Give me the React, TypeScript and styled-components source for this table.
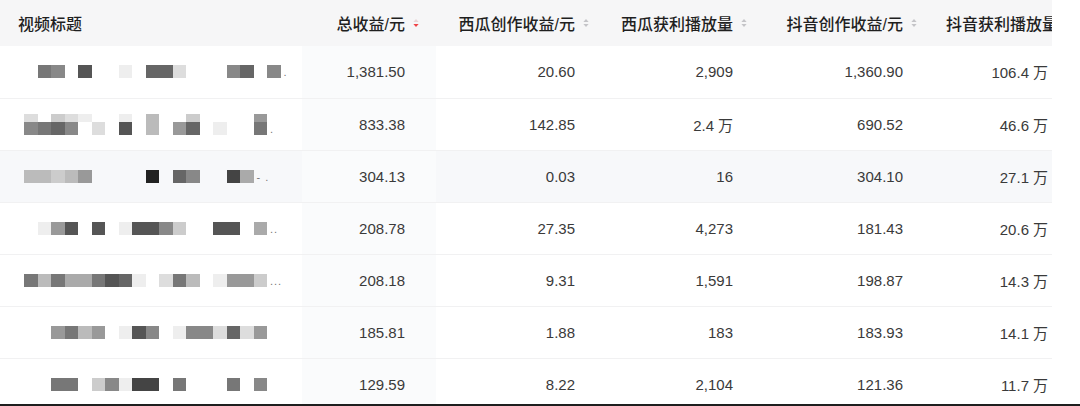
import React from "react";
import styled, { createGlobalStyle } from "styled-components";

const Global = createGlobalStyle`
  html, body { margin: 0; padding: 0; background: #ffffff; }
  body { font-family: "Liberation Sans", "Noto Sans CJK SC", sans-serif; }
`;

const Frame = styled.div`
  width: 1080px;
  height: 406px;
  box-sizing: border-box;
  border-bottom: 2px solid #1e1e1e;
  overflow: hidden;
  background: #ffffff;
`;

const Viewport = styled.div`
  width: 1052px;
  height: 100%;
  overflow: hidden;
`;

const Table = styled.table`
  width: 1079px;
  table-layout: fixed;
  border-collapse: collapse;
  border-spacing: 0;
`;

const HeadCell = styled.th<{ $align?: "left" | "right"; $padRight?: number }>`
  height: 46px;
  padding: 0 ${(p) => (p.$align === "left" ? 0 : p.$padRight ?? 17)}px 0 ${(p) => (p.$align === "left" ? "18px" : "0")};
  background: #f6f6f7;
  text-align: ${(p) => p.$align ?? "right"};
  font-size: 16px;
  font-weight: 500;
  color: #1f1f1f;
  white-space: nowrap;
  overflow: hidden;
  vertical-align: middle;
  box-sizing: border-box;
`;

const HeadInner = styled.span`
  display: inline-flex;
  align-items: center;
  gap: 8px;
`;

const Row = styled.tr<{ $hover?: boolean }>`
  background: ${(p) => (p.$hover ? "#f7f8fa" : "#ffffff")};
`;

const Cell = styled.td<{ $sorted?: boolean }>`
  height: 52px;
  padding: 0 31px 0 0;
  text-align: right;
  font-size: 15px;
  color: #3a3a3a;
  white-space: nowrap;
  border-bottom: 1px solid #f1f1f2;
  background: ${(p) => (p.$sorted ? "#fafbfc" : "transparent")};
  box-sizing: border-box;
  vertical-align: middle;
`;

const TitleCell = styled.td`
  height: 52px;
  padding: 0 0 0 24px;
  border-bottom: 1px solid #f1f1f2;
  box-sizing: border-box;
  vertical-align: middle;
`;

const Mosaic = styled.div`
  display: flex;
  align-items: flex-end;
`;

const MosaicGrid = styled.div`
  display: flex;
  flex-direction: column;
`;

const MosaicLine = styled.div`
  display: flex;
`;

const Block = styled.span<{ $shade: string; $h: number }>`
  display: block;
  width: 13.5px;
  height: ${(p) => p.$h}px;
  background: ${(p) => (p.$shade === "." ? "transparent" : `#${p.$shade}${p.$shade}${p.$shade}`)};
`;

const Trail = styled.span`
  font-size: 11px;
  line-height: 11px;
  color: #777;
  margin-left: 3px;
  letter-spacing: 1px;
`;

const Unit = styled.span`
  margin-left: 4px;
  font-family: "Noto Sans CJK SC", sans-serif;
  font-size: 15px;
`;

const SortIcon = ({ active }: { active?: boolean }) => (
  <svg width="6" height="10" viewBox="0 0 6 10" style={{ display: "block" }}>
    <path d="M3 1 L5.6 4 L0.4 4 Z" fill={active ? "#e8d4d6" : "#c4c4c8"} />
    <path d="M3 9 L5.6 6 L0.4 6 Z" fill={active ? "#f04347" : "#c4c4c8"} />
  </svg>
);

type MosaicRow = { lines: { s: string; h: number }[]; trail: string };

const titles: MosaicRow[] = [
  { lines: [{ s: "f78.5..e.66df..86.8", h: 13 }], trail: "." },
  {
    lines: [
      { s: "d.cde..e.b..c....9", h: 8 },
      { s: "8768.d.5.b.96.e..7", h: 13 },
    ],
    trail: ".",
  },
  { lines: [{ s: "bbcb9....2.68..4a", h: 13 }], trail: "-  ." },
  { lines: [{ s: ".e95.5.e558cf.55.a", h: 13 }], trail: ".." },
  { lines: [{ s: "7b7aa756e.d7b.e99c", h: 13 }], trail: "..." },
  { lines: [{ s: "..97b9.e58.e88d6d9", h: 13 }], trail: "" },
  { lines: [{ s: "ff77.c8e44.7...7.8", h: 13 }], trail: "" },
];

type Value = { n: string; u?: string };
const data: Value[][] = [
  [{ n: "1,381.50" }, { n: "20.60" }, { n: "2,909" }, { n: "1,360.90" }, { n: "106.4", u: "万" }],
  [{ n: "833.38" }, { n: "142.85" }, { n: "2.4", u: "万" }, { n: "690.52" }, { n: "46.6", u: "万" }],
  [{ n: "304.13" }, { n: "0.03" }, { n: "16" }, { n: "304.10" }, { n: "27.1", u: "万" }],
  [{ n: "208.78" }, { n: "27.35" }, { n: "4,273" }, { n: "181.43" }, { n: "20.6", u: "万" }],
  [{ n: "208.18" }, { n: "9.31" }, { n: "1,591" }, { n: "198.87" }, { n: "14.3", u: "万" }],
  [{ n: "185.81" }, { n: "1.88" }, { n: "183" }, { n: "183.93" }, { n: "14.1", u: "万" }],
  [{ n: "129.59" }, { n: "8.22" }, { n: "2,104" }, { n: "121.36" }, { n: "11.7", u: "万" }],
];

const columns = [
  { title: "总收益/元", width: 134, active: true, pad: 17 },
  { title: "西瓜创作收益/元", width: 170, pad: 17 },
  { title: "西瓜获利播放量", width: 158, pad: 17 },
  { title: "抖音创作收益/元", width: 170, pad: 17 },
  { title: "抖音获利播放量", width: 145, pad: 7 },
];

export default function App() {
  return (
    <>
      <Global />
      <Frame>
        <Viewport>
          <Table>
            <colgroup>
              <col style={{ width: 302 }} />
              {columns.map((c) => (
                <col key={c.title} style={{ width: c.width }} />
              ))}
            </colgroup>
            <thead>
              <tr>
                <HeadCell $align="left">视频标题</HeadCell>
                {columns.map((c) => (
                  <HeadCell key={c.title} $padRight={c.pad}>
                    <HeadInner>
                      {c.title}
                      <SortIcon active={c.active} />
                    </HeadInner>
                  </HeadCell>
                ))}
              </tr>
            </thead>
            <tbody>
              {data.map((row, i) => (
                <Row key={i} $hover={i === 2}>
                  <TitleCell>
                    <Mosaic>
                      <MosaicGrid>
                        {titles[i].lines.map((l, j) => (
                          <MosaicLine key={j}>
                            {l.s.split("").map((ch, k) => (
                              <Block key={k} $shade={ch} $h={l.h} />
                            ))}
                          </MosaicLine>
                        ))}
                      </MosaicGrid>
                      {titles[i].trail && <Trail>{titles[i].trail}</Trail>}
                    </Mosaic>
                  </TitleCell>
                  {row.map((v, j) => (
                    <Cell key={j} $sorted={j === 0}>
                      {v.n}
                      {v.u && <Unit>{v.u}</Unit>}
                    </Cell>
                  ))}
                </Row>
              ))}
            </tbody>
          </Table>
        </Viewport>
      </Frame>
    </>
  );
}
